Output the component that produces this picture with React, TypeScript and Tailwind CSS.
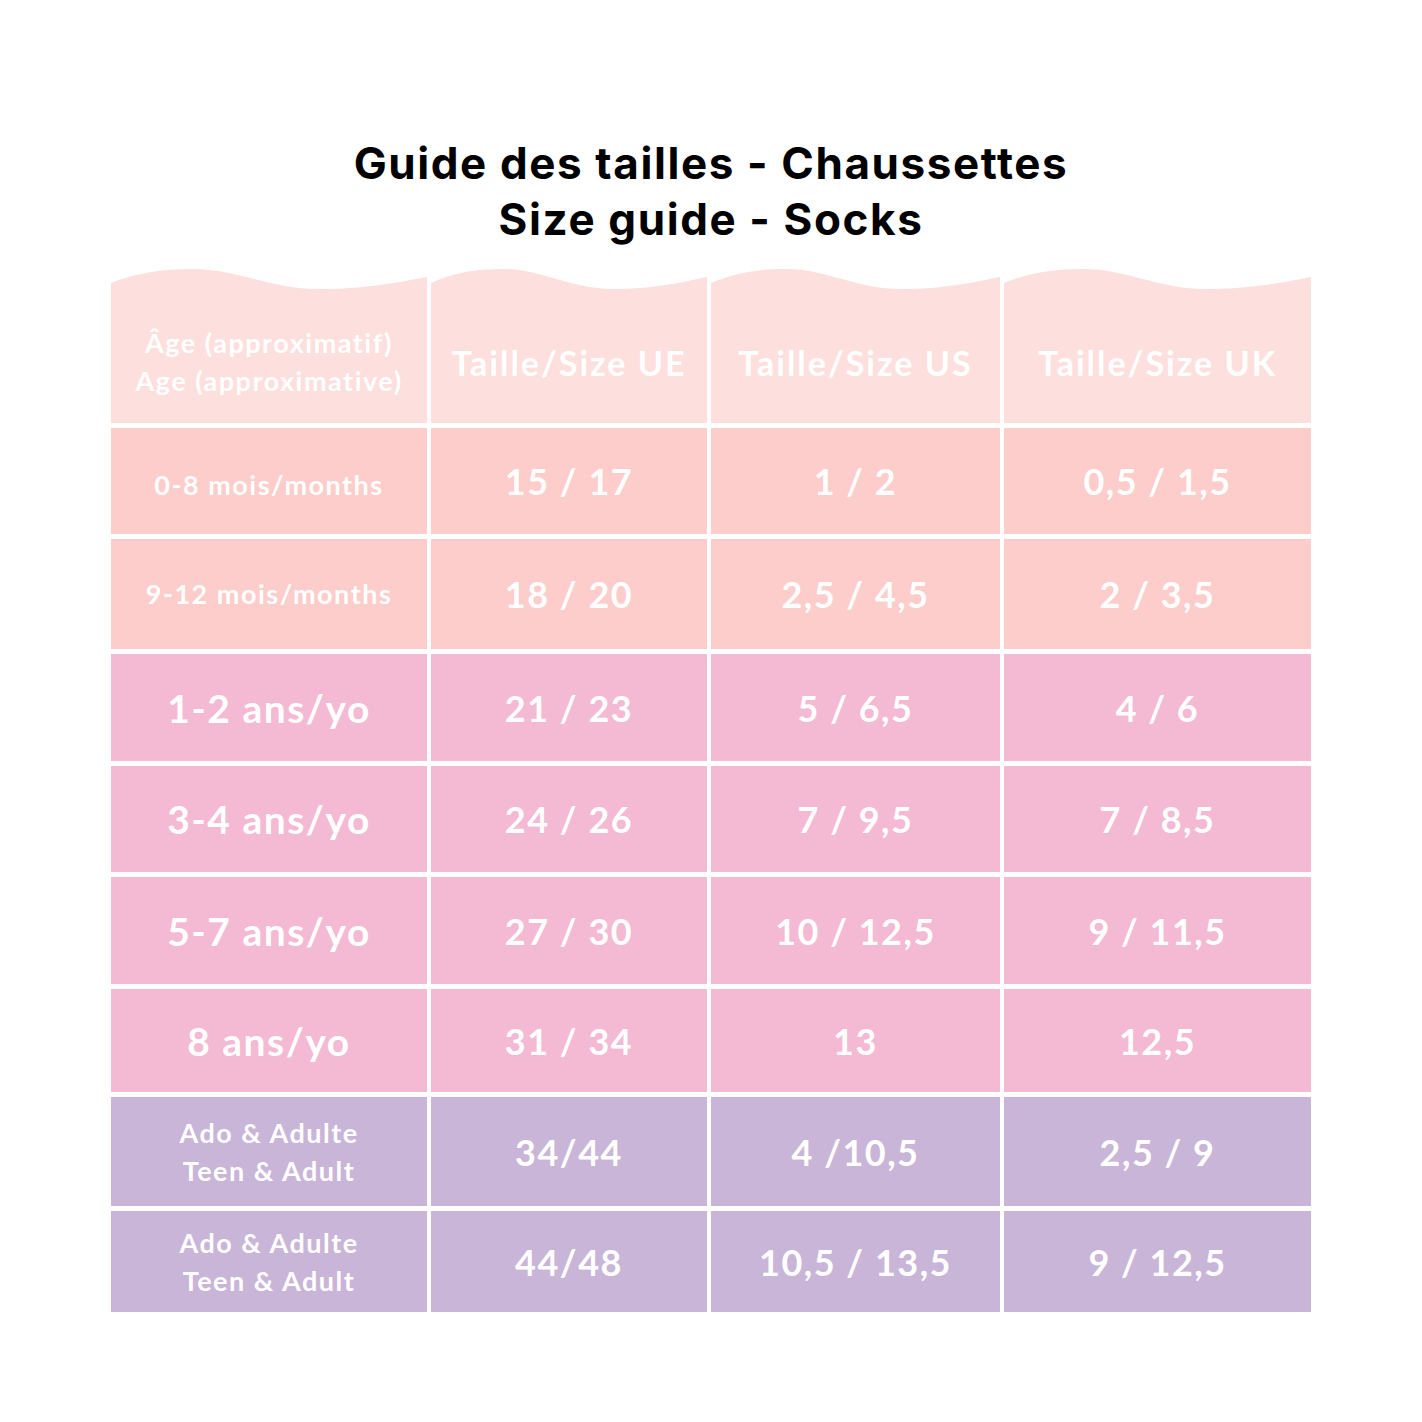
const rows = [
  { h: 'h-[106px]', bg: 'bg-[#fccdca]', age: ['0-8 mois/months'], ageSize: 'text-[27px] pt-[8px]', ue: '15 / 17', us: '1 / 2', uk: '0,5 / 1,5' },
  { h: 'h-[110px]', bg: 'bg-[#fccdca]', age: ['9-12 mois/months'], ageSize: 'text-[27px]', ue: '18 / 20', us: '2,5 / 4,5', uk: '2 / 3,5' },
  { h: 'h-[107px]', bg: 'bg-[#f4b9d3]', age: ['1-2 ans/yo'], ageSize: 'text-[39px]', ue: '21 / 23', us: '5 / 6,5', uk: '4 / 6' },
  { h: 'h-[106px]', bg: 'bg-[#f4b9d3]', age: ['3-4 ans/yo'], ageSize: 'text-[39px]', ue: '24 / 26', us: '7 / 9,5', uk: '7 / 8,5' },
  { h: 'h-[107px]', bg: 'bg-[#f4b9d3]', age: ['5-7 ans/yo'], ageSize: 'text-[39px]', ue: '27 / 30', us: '10 / 12,5', uk: '9 / 11,5' },
  { h: 'h-[103px]', bg: 'bg-[#f4b9d3]', age: ['8 ans/yo'], ageSize: 'text-[39px]', ue: '31 / 34', us: '13', uk: '12,5' },
  { h: 'h-[109px]', bg: 'bg-[#c9b5d7]', age: ['Ado & Adulte', 'Teen & Adult'], ageSize: 'text-[27px]', ue: '34/44', us: '4 /10,5', uk: '2,5 / 9' },
  { h: 'h-[101px]', bg: 'bg-[#c9b5d7]', age: ['Ado & Adulte', 'Teen & Adult'], ageSize: 'text-[27px]', ue: '44/48', us: '10,5 / 13,5', uk: '9 / 12,5' },
];

const Wave = () => (
  <svg className="block w-full h-[24px]" viewBox="0 0 100 24" preserveAspectRatio="none">
    <path d="M0,16 C8,6 16,2 26,2 C40,2 50,22 66,22 C80,22 90,16 100,10 V24 H0 Z" fill="#fddfde" />
  </svg>
);

const HeaderCell = ({ children }: { children: React.ReactNode }) => (
  <div className="flex flex-col">
    <Wave />
    <div className="h-[132px] bg-[#fddfde] flex flex-col items-center justify-center pt-[10px] text-white font-bold text-center">
      {children}
    </div>
  </div>
);

const Cell = ({ bg, h, children }: { bg: string; h: string; children: React.ReactNode }) => (
  <div className={`${bg} ${h} flex flex-col items-center justify-center text-white font-bold text-center`}>
    {children}
  </div>
);

export default function App() {
  return (
    <div className="w-[1422px] h-[1422px] bg-white flex flex-col items-center" style={{ fontFamily: 'Lato, "Noto Sans", sans-serif' }}>
      <div
        className="pt-[135px] text-center text-black font-bold text-[44px] leading-[56px] tracking-[1.6px]"
        style={{ fontFamily: 'Inter, "Liberation Sans", sans-serif' }}
      >
        <div>Guide des tailles - Chaussettes</div>
        <div>Size guide - Socks</div>
      </div>

      <div className="mt-[20px] grid grid-cols-[316px_276px_289px_307px] gap-x-[4px] gap-y-[5px]">
        <HeaderCell>
          <div className="text-[27px] leading-[38px] tracking-[1.5px]">Âge (approximatif)</div>
          <div className="text-[27px] leading-[38px] tracking-[1.5px]">Age (approximative)</div>
        </HeaderCell>
        <HeaderCell>
          <div className="text-[34px] tracking-[2px]">Taille/Size UE</div>
        </HeaderCell>
        <HeaderCell>
          <div className="text-[34px] tracking-[2px]">Taille/Size US</div>
        </HeaderCell>
        <HeaderCell>
          <div className="text-[34px] tracking-[2px]">Taille/Size UK</div>
        </HeaderCell>

        {rows.map((r, i) => (
          <>
            <Cell key={`a${i}`} bg={r.bg} h={r.h}>
              {r.age.map((line) => (
                <div key={line} className={`${r.ageSize} leading-[38px] tracking-[1.5px]`}>
                  {line}
                </div>
              ))}
            </Cell>
            <Cell key={`b${i}`} bg={r.bg} h={r.h}>
              <div className="text-[36px] tracking-[1.5px]">{r.ue}</div>
            </Cell>
            <Cell key={`c${i}`} bg={r.bg} h={r.h}>
              <div className="text-[36px] tracking-[1.5px]">{r.us}</div>
            </Cell>
            <Cell key={`d${i}`} bg={r.bg} h={r.h}>
              <div className="text-[36px] tracking-[1.5px]">{r.uk}</div>
            </Cell>
          </>
        ))}
      </div>
    </div>
  );
}
